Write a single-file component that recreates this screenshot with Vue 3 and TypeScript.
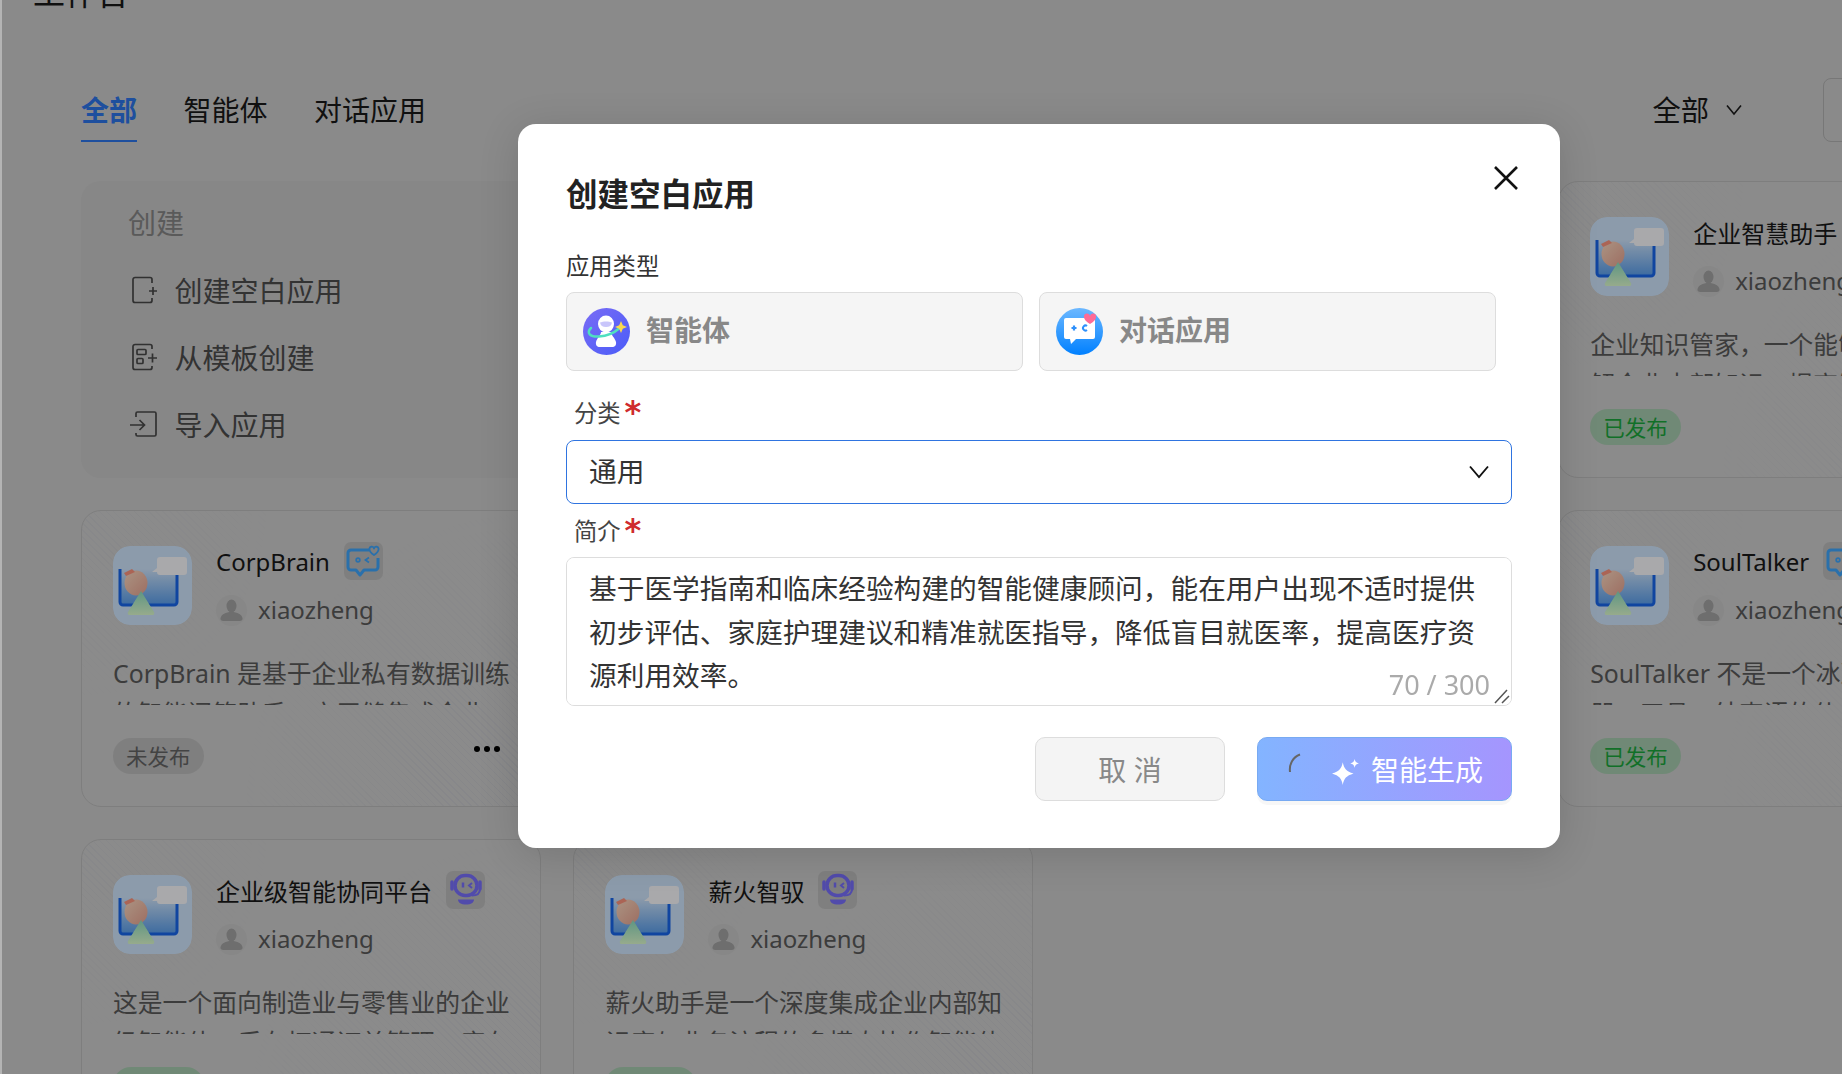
<script setup lang="ts">
import { ref } from "vue";

interface AppCard {
  title: string
  kind: "chat" | "bot"
  desc: string
  published: boolean
  col: number
  row: number
  more?: boolean
}

const tabs = ["全部", "智能体", "对话应用"]
const activeTab = ref(0)

const cards: AppCard[] = [
  { title: "企业智慧助手", kind: "bot", desc: "企业知识管家，一个能够帮助员工了解企业内部知识，提高制度理解的助手", published: true, col: 4, row: 1 },
  { title: "CorpBrain", kind: "chat", desc: "CorpBrain 是基于企业私有数据训练的智能问答助手，它无缝集成企业", published: false, col: 1, row: 2, more: true },
  { title: "SoulTalker", kind: "chat", desc: "SoulTalker 不是一个冰冷的聊天机器，工具，结束语的伙伴", published: true, col: 4, row: 2 },
  { title: "企业级智能协同平台", kind: "bot", desc: "这是一个面向制造业与零售业的企业级智能体，后有打通订单管理，库存", published: true, col: 1, row: 3 },
  { title: "薪火智驭", kind: "bot", desc: "薪火助手是一个深度集成企业内部知识库与业务流程的多模态协作智能体", published: true, col: 2, row: 3 },
]

const summary = ref("基于医学指南和临床经验构建的智能健康顾问，能在用户出现不适时提供初步评估、家庭护理建议和精准就医指导，降低盲目就医率，提高医疗资源利用效率。")
</script>

<template>
  <div class="page">
    <h1 class="page-title">工作台</h1>

    <div class="toolbar">
      <div class="tabs">
        <div v-for="(tab, index) in tabs" :key="tab" class="tab" :class="{ 'tab-active': index === activeTab }">{{ tab }}</div>
      </div>
      <div class="filter">
        <span>全部</span>
        <svg width="16" height="12" viewBox="0 0 16 12" fill="none" stroke="#1c1c1c" stroke-width="1.6"><path d="M1 1.5 8 10l7-8.5" /></svg>
      </div>
      <div class="search"></div>
    </div>

    <div class="grid">
      <div class="create-card">
        <div class="create-title">创建</div>
        <div class="create-item">
          <svg class="create-icon" width="28" height="28" viewBox="0 0 28 28" fill="none" stroke="#4a4a4a" stroke-width="1.7">
            <path d="M22 7V3.5a2 2 0 0 0-2-2H5a2 2 0 0 0-2 2v21a2 2 0 0 0 2 2h15a2 2 0 0 0 2-2V22" />
            <path d="M19 15h8M23 11v8" />
          </svg>
          <span>创建空白应用</span>
        </div>
        <div class="create-item">
          <svg class="create-icon" width="28" height="28" viewBox="0 0 28 28" fill="none" stroke="#4a4a4a" stroke-width="1.7">
            <path d="M22 6V3.5a2 2 0 0 0-2-2H5a2 2 0 0 0-2 2v21a2 2 0 0 0 2 2h15a2 2 0 0 0 2-2V23" />
            <rect x="7" y="6.5" width="9" height="5" rx="1" />
            <rect x="7" y="15.5" width="6" height="5" rx="1" />
            <path d="M18 15h9M22.500 10.500v9" />
          </svg>
          <span>从模板创建</span>
        </div>
        <div class="create-item">
          <svg class="create-icon" width="28" height="28" viewBox="0 0 28 28" fill="none" stroke="#4a4a4a" stroke-width="1.7">
            <path d="M6 7V3.500a1.500 1.500 0 0 1 1.500-1.500h17a1.500 1.500 0 0 1 1.500 1.500v21a1.500 1.500 0 0 1-1.500 1.500h-17a1.500 1.500 0 0 1-1.500-1.500V23" />
            <path d="M0 15h14M9.500 10l5 5-5 5" />
          </svg>
          <span>导入应用</span>
        </div>
      </div>

      <div
        v-for="card in cards"
        :key="card.title"
        class="app-card"
        :style="{ gridColumn: card.col, gridRow: card.row }"
      >
        <div class="card-head">
          <svg class="app-logo" width="79" height="79" viewBox="0 0 79 79">
            <defs>
              <linearGradient id="logoWell" x1="0" y1="0" x2="0" y2="1">
                <stop offset="0" stop-color="#d1e7ff" />
                <stop offset="1" stop-color="#5ba0ef" />
              </linearGradient>
              <linearGradient id="logoBall" x1="0" y1="0" x2="1" y2="1">
                <stop offset="0" stop-color="#ffdcc4" />
                <stop offset="1" stop-color="#eba592" />
              </linearGradient>
              <linearGradient id="logoPeak" x1="0" y1="0" x2="0" y2="1">
                <stop offset="0" stop-color="#8ee0c2" />
                <stop offset="1" stop-color="#e0ffd1" />
              </linearGradient>
            </defs>
            <rect width="79" height="79" rx="17" fill="#d1e7ff" />
            <path d="M7 23h57v33a3 3 0 0 1-3 3H10a3 3 0 0 1-3-3z" fill="url(#logoWell)" />
            <path d="M7 23v33a3 3 0 0 0 3 3h51a3 3 0 0 0 3-3V23" fill="none" stroke="#1968ef" stroke-width="3" />
            <path d="M47 11h24a3 3 0 0 1 3 3v12a3 3 0 0 1-3 3H47a3 3 0 0 1-3-3l-5 0 5-4v-8a3 3 0 0 1 3-3z" fill="#fcfcff" />
            <ellipse cx="23" cy="37" rx="11.500" ry="12.500" fill="url(#logoBall)" />
            <path d="M11 27l8-4 3 3-9 4z" fill="#ff967f" />
            <path d="M28 45 41 66a2 2 0 0 1-2 3H17a2 2 0 0 1-2-3z" fill="url(#logoPeak)" />
          </svg>
          <div class="card-info">
            <div class="card-title-row">
              <span class="card-title">{{ card.title }}</span>
              <span class="kind-badge">
                <svg v-if="card.kind === 'chat'" width="34" height="34" viewBox="0 0 34 34" fill="none" stroke="#3fa8ff" stroke-width="3">
                  <path d="M23 6H5a3 3 0 0 0-3 3v14a3 3 0 0 0 3 3h5l4 5 4-5h11a3 3 0 0 0 3-3v-9" stroke-linejoin="round" />
                  <circle cx="12" cy="16" r="1.800" stroke-width="1.800" />
                  <path d="M23 13.500 19.500 16l3.500 2.500" stroke-width="1.800" />
                  <path d="M28 11c-3-2-4.500-3.500-4.500-5.500a2.300 2.300 0 0 1 4.500-1 2.300 2.300 0 0 1 4.500 1c0 2-1.500 3.500-4.500 5.500z" stroke-width="1.800" stroke-linejoin="round" />
                </svg>
                <svg v-else width="34" height="34" viewBox="0 0 34 34" fill="none" stroke="#7a70ff" stroke-width="3.500">
                  <rect x="6" y="2.500" width="22" height="20" rx="10" />
                  <path d="M3 9v7M31 9v7" stroke-width="3.500" stroke-linecap="round" />
                  <path d="M14 9.500v5" stroke-width="2.500" />
                  <path d="M23 10l-3 2.500 3 2.500" stroke-width="2" />
                  <path d="M31 16c0 4-3 6.500-8 6.500" stroke-width="2" />
                  <path d="M9 26.500h16c0 3-3 5-8 5s-8-2-8-5z" fill="#7a70ff" stroke="none" />
                </svg>
              </span>
            </div>
            <div class="card-user">
              <span class="avatar">
                <svg width="31" height="31" viewBox="0 0 31 31" fill="#a4a4a4">
                  <ellipse cx="15.500" cy="11" rx="5" ry="6.500" />
                  <path d="M15.500 17c-6 0-10 2.500-11 6-.5 2 1 3 3 3h16c2 0 3.500-1 3-3-1-3.500-5-6-11-6z" />
                </svg>
              </span>
              <span>xiaozheng</span>
            </div>
          </div>
        </div>
        <div class="card-desc">{{ card.desc }}</div>
        <div class="card-foot">
          <span class="tag" :class="card.published ? 'tag-on' : 'tag-off'">{{ card.published ? "已发布" : "未发布" }}</span>
          <span v-if="card.more" class="more"><i></i><i></i><i></i></span>
        </div>
      </div>
    </div>

    <div class="mask">
      <div class="modal">
        <svg class="close" width="24" height="24" viewBox="0 0 24 24" stroke="#111" stroke-width="2.600"><path d="M1 1l22 22M23 1 1 23" /></svg>
        <div class="modal-title">创建空白应用</div>
        <div class="type-label">应用类型</div>
        <div class="type-row">
          <div class="type-item">
            <svg width="47" height="47" viewBox="0 0 47 47">
              <defs>
                <linearGradient id="agentBg" x1="0" y1="0" x2="1" y2="1">
                  <stop offset="0" stop-color="#7a6cf5" />
                  <stop offset="1" stop-color="#4a5cf8" />
                </linearGradient>
              </defs>
              <circle cx="23.500" cy="23.500" r="23.500" fill="url(#agentBg)" />
              <ellipse cx="23" cy="16" rx="8" ry="8.500" fill="#fff" />
              <path d="M17 14.500c3-1.500 9-1.500 12 0-.5 3-2.500 4.500-6 4.500s-5.500-1.500-6-4.500z" fill="#c9c6fb" />
              <path d="M18 24h10c0 3 4 6 5 10 .5 3-1 5-4 5H17c-3 0-4.500-2-4-5 1-4 5-7 5-10z" fill="#fff" />
              <path d="M8 20c-5 5-1 9 8 8.500 8-.5 15-3.500 20-8" fill="none" stroke="#4fe0c0" stroke-width="2.500" stroke-linecap="round" />
              <path d="M38 13l1.800 4.200L44 19l-4.200 1.800L38 25l-1.800-4.200L32 19l4.200-1.800z" fill="#f8d950" />
            </svg>
            <span>智能体</span>
          </div>
          <div class="type-item">
            <svg width="47" height="47" viewBox="0 0 47 47">
              <defs>
                <linearGradient id="chatBg" x1="0" y1="0" x2="0" y2="1">
                  <stop offset="0" stop-color="#6cb8ff" />
                  <stop offset="1" stop-color="#0080ff" />
                </linearGradient>
              </defs>
              <circle cx="23.500" cy="23.500" r="23.500" fill="url(#chatBg)" />
              <path d="M10 10h27a2 2 0 0 1 2 2v17a2 2 0 0 1-2 2H20l-5 5-1-5h-4a2 2 0 0 1-2-2V12a2 2 0 0 1 2-2z" fill="#fff" />
              <path d="M18 17.500v5M15.500 20h5" stroke="#2e90fb" stroke-width="2.200" />
              <path d="M31 18a2.500 2.500 0 1 0 0 4" stroke="#2e90fb" stroke-width="2" fill="none" />
              <path d="M34 16c-4-2.500-6-4.500-6-7a3 3 0 0 1 6-1 3 3 0 0 1 6 1c0 2.500-2 4.500-6 7z" fill="#ff6b96" />
            </svg>
            <span>对话应用</span>
          </div>
        </div>

        <div class="field-label">分类<span class="required">*</span></div>
        <div class="select">
          <span>通用</span>
          <svg width="20" height="14" viewBox="0 0 20 14" fill="none" stroke="#111" stroke-width="1.900"><path d="M1 1.500 10 12l9-10.500" /></svg>
        </div>

        <div class="field-label">简介<span class="required">*</span></div>
        <div class="textarea-wrap">
          <textarea class="textarea" readonly :value="summary"></textarea>
          <span class="count">70 / 300</span>
          <svg class="resize-grip" width="17" height="16" viewBox="0 0 17 16" fill="none" stroke="#555" stroke-width="1.500"><path d="M1 15 13 2M8 15l7-7" /></svg>
        </div>

        <div class="actions">
          <button class="btn-cancel">取 消</button>
          <button class="btn-generate">
            <svg class="spinner" width="14" height="20" viewBox="0 0 14 20" fill="none" stroke="#666" stroke-width="2"><path d="M2 19C1 11 5 4 12 1.500" /></svg>
            <svg class="sparkle" width="28" height="26" viewBox="0 0 26 24" fill="#fff">
              <path d="M10 3c1.200 6 3.200 8.300 10 10.500C13.200 15.700 11.200 18 10 24 8.800 18 6.800 15.700 0 13.500 6.800 11.300 8.800 9 10 3z" />
              <path d="M21 0c.5 2.500 1.500 3.500 4 4-2.500.5-3.500 1.500-4 4-.5-2.500-1.500-3.500-4-4 2.500-.5 3.500-1.500 4-4z" />
            </svg>
            <span>智能生成</span>
          </button>
        </div>
      </div>
    </div>
  </div>
</template>

<style>
html, body {
  margin: 0;
  background: #cecece;
}
</style>

<style scoped>
.page {
  position: relative;
  box-sizing: border-box;
  width: 1842px;
  height: 1074px;
  overflow: hidden;
  border-left: 2px solid #b4b4b4;
  padding-left: 79px;
  font-family: "Noto Sans", "Noto Sans CJK SC", sans-serif;
  color: #181818;
  background: #cecece;
}

.page-title {
  margin: -27px 0 0 -48px;
  font-size: 32px;
  line-height: 40px;
  font-weight: 400;
}

.toolbar {
  display: flex;
  align-items: flex-start;
  width: 1936px;
  margin-top: 77px;
}

.tabs {
  display: flex;
  gap: 46.500px;
}

.tab {
  font-size: 28px;
  line-height: 40px;
  padding-bottom: 10px;
  border-bottom: 2px solid transparent;
}

.tab-active {
  color: #2e76ec;
  font-weight: 700;
  border-bottom-color: #2e76ec;
}

.filter {
  display: flex;
  align-items: center;
  gap: 17px;
  margin-left: auto;
  font-size: 28.300px;
  line-height: 40px;
}

.search {
  box-sizing: border-box;
  width: 194px;
  height: 64px;
  margin: -12px 0 0 81px;
  border: 1px solid #b2b2b2;
  border-radius: 8px;
}

.grid {
  display: grid;
  grid-template-columns: repeat(4, 460px);
  grid-auto-rows: 297px;
  column-gap: 32.400px;
  row-gap: 32px;
  margin-top: 39px;
}

.create-card {
  grid-column: 1;
  grid-row: 1;
  box-sizing: border-box;
  padding: 22px 49px;
  border-radius: 20px;
  background: #c9c9c9;
}

.create-title {
  margin-left: -2px;
  font-size: 28px;
  line-height: 40px;
  color: #868686;
  margin-bottom: 13px;
}

.create-item {
  display: flex;
  align-items: center;
  gap: 16.500px;
  height: 67px;
  font-size: 28px;
  color: #4c4c4c;
}

.create-icon {
  flex: none;
}

.app-card {
  position: relative;
  box-sizing: border-box;
  padding: 35px 31px 0;
  border: 1px solid #bdbdbd;
  border-radius: 20px;
  background: #cfcfcf;
  overflow: hidden;
}

.app-card::before {
  content: "";
  position: absolute;
  inset: 0;
  background: repeating-linear-gradient(45deg, rgba(120, 130, 190, .09) 0 1px, transparent 1px 5px);
  -webkit-mask-image: radial-gradient(circle at 100% 100%, #000, transparent 55%), radial-gradient(circle at 0 0, rgba(0, 0, 0, .6), transparent 35%);
  mask-image: radial-gradient(circle at 100% 100%, #000, transparent 55%), radial-gradient(circle at 0 0, rgba(0, 0, 0, .6), transparent 35%);
  pointer-events: none;
}

.card-head {
  position: relative;
  display: flex;
  gap: 24px;
  height: 79px;
}

.app-logo {
  flex: none;
  border-radius: 17px;
}

.card-info {
  display: flex;
  flex-direction: column;
  gap: 15px;
  margin-top: -4px;
}

.card-title-row {
  display: flex;
  align-items: center;
  gap: 14px;
  height: 38px;
}

.card-title {
  font-size: 24px;
  white-space: nowrap;
}

.kind-badge {
  display: flex;
  align-items: center;
  justify-content: center;
  width: 39px;
  height: 38px;
  border-radius: 7px;
  background: #bebebe;
}

.card-user {
  display: flex;
  align-items: center;
  gap: 11px;
  font-size: 24px;
  color: #5a5a5a;
}

.card-user span:last-child {
  margin-top: -2px;
}

.avatar {
  display: flex;
  width: 31px;
  height: 31px;
  border-radius: 50%;
  overflow: hidden;
  background: #cacaca;
}

.card-desc {
  position: relative;
  height: 52px;
  margin: 28px -3px 0 0;
  overflow: hidden;
  font-size: 24.800px;
  line-height: 40px;
  color: #5a5a5a;
}

.card-foot {
  position: relative;
  display: flex;
  align-items: center;
  justify-content: space-between;
  margin-top: 33px;
}

.tag {
  display: inline-flex;
  align-items: center;
  box-sizing: border-box;
  height: 36px;
  padding: 0 13px 2px;
  border-radius: 18px;
  font-size: 21.500px;
}

.tag-on {
  background: #a8ccb1;
  color: #1aa83c;
}

.tag-off {
  background: #bebebe;
  color: #656565;
}

.more {
  display: flex;
  gap: 4px;
  margin: -14px 9px 0 0;
}

.more i {
  display: block;
  width: 6px;
  height: 6px;
  border-radius: 50%;
  background: #000;
}

.mask {
  position: absolute;
  inset: 0;
  box-sizing: border-box;
  padding: 124px 0 0 516px;
  background: rgba(0, 0, 0, .33);
}

.modal {
  position: relative;
  box-sizing: border-box;
  width: 1042px;
  padding: 48px 48px 47px 48px;
  border-radius: 18px;
  background: #fff;
  box-shadow: 0 6px 40px rgba(0, 0, 0, .14);
}

.close {
  position: absolute;
  top: 42px;
  right: 42px;
}

.modal-title {
  font-size: 31.500px;
  line-height: 44px;
  font-weight: 700;
  color: #222;
}

.type-label {
  margin-top: 34px;
  font-size: 23.300px;
  line-height: 32px;
  color: #333;
}

.type-row {
  display: flex;
  gap: 16px;
  width: 930px;
  margin-top: 10px;
}

.type-item {
  flex: 1;
  display: flex;
  align-items: center;
  gap: 16px;
  box-sizing: border-box;
  height: 79px;
  padding-left: 16px;
  border: 1px solid #ddd;
  border-radius: 8px;
  background: #f5f5f5;
  font-size: 28px;
  font-weight: 700;
  color: #888;
}

.type-item span {
  margin-top: -5px;
}

.field-label {
  display: flex;
  align-items: center;
  height: 32px;
  margin-top: 25px;
  padding-left: 8px;
  font-size: 23.300px;
  color: #444;
}

.select + .field-label {
  margin-top: 10px;
}

.required {
  margin-left: 4px;
  font-family: "DejaVu Sans", sans-serif;
  font-size: 32px;
  line-height: 32px;
  font-weight: 700;
  color: #cf2b2e;
}

.select {
  display: flex;
  align-items: center;
  justify-content: space-between;
  box-sizing: border-box;
  height: 64px;
  margin-top: 12px;
  padding: 0 22px 0 22px;
  border: 1px solid #2f74e0;
  border-radius: 8px;
  font-size: 27.700px;
  color: #333;
}

.select span {
  margin-top: -4px;
}

.textarea-wrap {
  position: relative;
  height: 149px;
  margin-top: 11px;
}

.textarea {
  display: block;
  box-sizing: border-box;
  width: 100%;
  height: 100%;
  padding: 9px 22px;
  border: 1px solid #ddd;
  border-radius: 8px;
  outline: none;
  resize: none;
  font-family: inherit;
  font-size: 27.700px;
  line-height: 43.700px;
  color: #333;
}

.count {
  position: absolute;
  right: 22px;
  bottom: 3px;
  font-size: 27px;
  line-height: 36px;
  color: #aaa;
}

.resize-grip {
  position: absolute;
  right: 1px;
  bottom: 2px;
}

.actions {
  display: flex;
  justify-content: flex-end;
  gap: 32px;
  margin-top: 31px;
}

.btn-cancel,
.btn-generate {
  box-sizing: border-box;
  height: 64px;
  border-radius: 10px;
  font-family: inherit;
  font-size: 28px;
}

.btn-cancel {
  width: 190px;
  border: 1px solid #ddd;
  background: #f4f4f4;
  color: #888;
}

.btn-generate {
  display: flex;
  align-items: center;
  width: 255px;
  padding: 0 0 0 30px;
  border: 1px solid #78aaf2;
  background: linear-gradient(90deg, #83b4ff, #a595fe);
  box-shadow: 0 4px 0 rgba(0, 0, 0, .03);
  color: #fff;
}

.spinner {
  margin-top: -12px;
}

.sparkle {
  margin: 6px 11px 0 30px;
}
</style>
